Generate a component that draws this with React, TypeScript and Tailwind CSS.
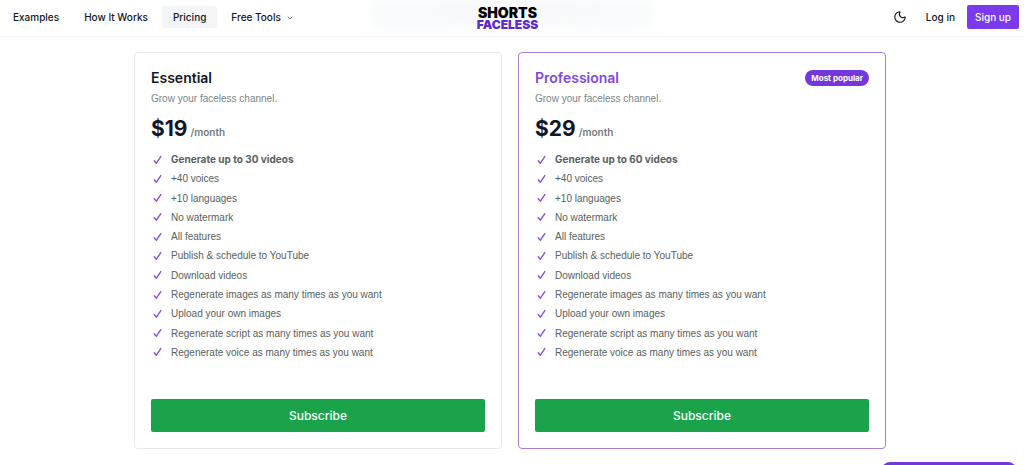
import React from 'react';
import { ChevronDown, Moon } from 'lucide-react';
import clsx from 'clsx';

interface Plan {
  name: string;
  price: number;
  videos: number;
  popular?: boolean;
}

const PLANS: Plan[] = [
  { name: 'Essential', price: 19, videos: 30 },
  { name: 'Professional', price: 29, videos: 60, popular: true },
];

const FEATURES = [
  '+40 voices',
  '+10 languages',
  'No watermark',
  'All features',
  'Publish & schedule to YouTube',
  'Download videos',
  'Regenerate images as many times as you want',
  'Upload your own images',
  'Regenerate script as many times as you want',
  'Regenerate voice as many times as you want',
];

function Header() {
  return (
    <header className="relative flex h-[37px] items-center overflow-hidden border-b border-gray-100 pr-[5px] pb-[3px] pl-[2px]">
      <div className="absolute top-0 left-1/2 h-7 w-[280px] -translate-x-1/2 bg-gradient-to-r from-gray-50 via-gray-100/60 to-gray-50 blur-xs" />

      <nav className="relative flex flex-1 items-center gap-[3px] text-[10px] leading-4 font-medium text-gray-900">
        <a href="#examples" className="px-[11px] py-[3px]">Examples</a>
        <a href="#how" className="px-[11px] py-[3px]">How It Works</a>
        <a href="#pricing" className="rounded-xs bg-[#f3f5f7] px-[11px] py-[3px]">Pricing</a>
        <button type="button" className="flex items-center gap-[5px] px-[11px] py-[3px]">
          Free Tools
          <ChevronDown className="mt-[2px] h-2 w-2" />
        </button>
      </nav>

      <a href="/" className="relative mr-[6px] flex flex-col items-center pt-[2px] font-black">
        <span className="text-[14px] leading-[13px] text-black">SHORTS</span>
        <span className="text-[12px] leading-[11px] text-[#5b2bd0]">FACELESS</span>
      </a>

      <div className="relative flex flex-1 items-center justify-end text-[10px] leading-4 font-medium text-gray-900">
        <button type="button" aria-label="Toggle dark mode" className="mr-[19px]">
          <Moon className="h-[14px] w-[14px]" />
        </button>
        <a href="#login" className="mr-3">Log in</a>
        <a href="#signup" className="rounded-xs bg-[#7c3aed] px-2 py-1 text-white">Sign up</a>
      </div>
    </header>
  );
}

function CheckMark() {
  return (
    <svg viewBox="0 0 12 12" className="h-3 w-3 shrink-0" fill="none" stroke="#8453dc" strokeWidth="1.4" strokeLinecap="round" strokeLinejoin="round">
      <path d="M3.2 6.8 5.4 9.2 9.8 2.6" />
    </svg>
  );
}

function Feature({ bold, children }: { bold?: boolean; children: React.ReactNode }) {
  return (
    <li className={clsx('flex items-center gap-2', bold && "font-['Inter',sans-serif] font-bold")}>
      <CheckMark />
      {children}
    </li>
  );
}

function PlanCard({ name, price, videos, popular }: Plan) {
  return (
    <section
      className={clsx(
        'flex flex-1 flex-col rounded-sm border p-4',
        popular ? 'border-[#a97fd6]' : 'border-gray-200'
      )}
    >
      <div className="flex items-center justify-between">
        <h2 className={clsx('text-[14px] leading-[18px] font-semibold', popular ? 'text-[#8049dc]' : 'text-gray-900')}>
          {name}
        </h2>
        {popular && (
          <span className="rounded-full bg-[#7437dc] px-[6px] text-[8px] leading-4 font-bold text-white">
            Most popular
          </span>
        )}
      </div>
      <p className="mt-1 font-['Liberation_Sans',sans-serif] text-[10px] leading-4 text-[#7c8482]">
        Grow your faceless channel.
      </p>

      <p className="mt-2 flex items-baseline gap-[3px]">
        <span className="text-[21px] leading-7 font-bold text-gray-900">${price}</span>
        <span className="text-[10px] font-semibold text-[#727977]">/month</span>
      </p>

      <ul className="mt-[10px] flex h-[206px] flex-col justify-between font-['Liberation_Sans',sans-serif] text-[10px] leading-[13px] text-[#56605e]">
        <Feature bold>Generate up to {videos} videos</Feature>
        {FEATURES.map((feature) => (
          <Feature key={feature}>{feature}</Feature>
        ))}
      </ul>

      <button type="button" className="mt-10 rounded-xs bg-[#1aa34a] py-2 text-[12px] leading-[17px] font-medium text-white">
        Subscribe
      </button>
    </section>
  );
}

export default function App() {
  return (
    <div className="min-h-screen bg-white font-['Inter','Liberation_Sans',sans-serif]">
      <Header />
      <main className="mr-1 px-4 pt-[15px]">
        <div className="mx-auto flex max-w-[752px] gap-4">
          {PLANS.map((plan) => (
            <PlanCard key={plan.name} {...plan} />
          ))}
        </div>
      </main>

      {/* Chat launcher peeking in from the bottom edge */}
      <button
        type="button"
        aria-label="Open chat"
        className="fixed right-2 -bottom-[25px] h-7 w-[134px] rounded-lg bg-[#7437dc]"
      />
    </div>
  );
}
